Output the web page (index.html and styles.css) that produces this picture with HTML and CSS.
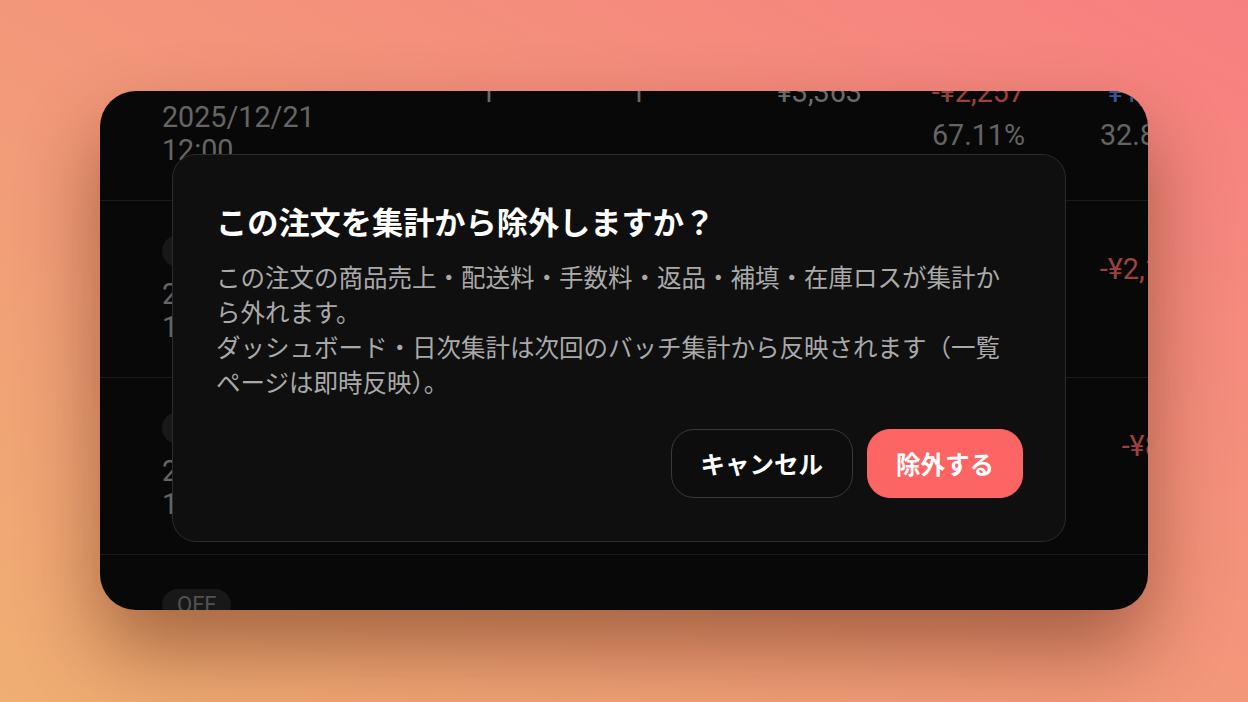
FILE: index.html
```html
<!DOCTYPE html>
<html lang="ja">
<head>
<meta charset="utf-8">
<title>注文除外</title>
<link rel="stylesheet" href="styles.css">
</head>
<body>
<div class="stage">
  <div class="window">
    <div class="table">
      <div class="row">
        <div class="cell date-cell">
          <span class="pill">OFF</span>
          <div class="date">2025/12/21<br>12:00</div>
        </div>
        <div class="cell num"><div class="v">1</div></div>
        <div class="cell num"><div class="v">1</div></div>
        <div class="cell num"><div class="v">¥3,363</div></div>
        <div class="cell num"><div class="v neg">-¥2,257</div><div class="pct">67.11%</div></div>
        <div class="cell num"><div class="v pos">¥1,106</div><div class="pct">32.89%</div></div>
      </div>
      <div class="row">
        <div class="cell date-cell">
          <span class="pill">OFF</span>
          <div class="date">2025/12/20<br>18:30</div>
        </div>
        <div class="cell num"><div class="v">1</div></div>
        <div class="cell num"><div class="v">1</div></div>
        <div class="cell num"><div class="v">¥2,980</div></div>
        <div class="cell num"><div class="v neg">-¥3,104</div></div>
        <div class="cell num"><div class="v neg">-¥2,124</div></div>
      </div>
      <div class="row">
        <div class="cell date-cell">
          <span class="pill">OFF</span>
          <div class="date">2025/12/19<br>10:15</div>
        </div>
        <div class="cell num"><div class="v">1</div></div>
        <div class="cell num"><div class="v">1</div></div>
        <div class="cell num"><div class="v">¥1,480</div></div>
        <div class="cell num"><div class="v neg">-¥2,292</div></div>
        <div class="cell num"><div class="v neg">-¥812</div></div>
      </div>
      <div class="row">
        <div class="cell date-cell">
          <span class="pill">OFF</span>
          <div class="date">2025/12/18<br>09:00</div>
        </div>
        <div class="cell num"><div class="v">1</div></div>
        <div class="cell num"><div class="v">1</div></div>
        <div class="cell num"><div class="v">¥2,200</div></div>
        <div class="cell num"><div class="v neg">-¥1,950</div></div>
        <div class="cell num"><div class="v pos">¥250</div></div>
      </div>
    </div>
    <div class="overlay"></div>
    <div class="dialog" role="dialog">
      <h2 class="dialog-title">この注文を集計から除外しますか？</h2>
      <p class="dialog-body">この注文の商品売上・配送料・手数料・返品・補填・在庫ロスが集計から外れます。<br>ダッシュボード・日次集計は次回のバッチ集計から反映されます（一覧ページは即時反映）。</p>
      <div class="actions">
        <button class="btn btn-cancel">キャンセル</button>
        <button class="btn btn-danger">除外する</button>
      </div>
    </div>
  </div>
</div>
</body>
</html>
```

FILE: styles.css
```css
html, body {
  margin: 0;
  padding: 0;
}

body {
  width: 1248px;
  height: 702px;
  overflow: hidden;
  background: linear-gradient(to top right, #efae72 0%, #f3977a 50%, #f77f80 100%);
  font-family: "Noto Sans CJK JP", "Noto Sans", sans-serif;
}

.stage {
  padding: 91px 0 0 100px;
}

.window {
  position: relative;
  width: 1048px;
  height: 519px;
  border-radius: 36px;
  overflow: hidden;
  background: #0a0a0a;
  box-shadow: 0 40px 80px rgba(70, 25, 0, 0.45);
}

.table {
  margin-top: -67px;
}

.row {
  display: grid;
  grid-template-columns: 238px 96px 150px 216px 163px 168px;
  height: 176px;
  padding-left: 62px;
  border-bottom: 1px solid #1f1f1f;
  font-family: Roboto, "Noto Sans", sans-serif;
  font-size: 28.7px;
  color: #7a7a7a;
}

.cell {
  display: flex;
  flex-direction: column;
}

.date-cell {
  align-items: flex-start;
  padding-top: 34px;
}

.pill {
  display: inline-block;
  height: 32px;
  line-height: 32px;
  padding: 0 15px;
  border-radius: 16px;
  background: #1c1c1c;
  color: #5e5e5e;
  font-size: 22px;
}

.date {
  margin-top: 11px;
  line-height: 33px;
  color: #747474;
}

.num {
  align-items: flex-end;
  padding-top: 51px;
  line-height: 34px;
}

.v.neg {
  color: #b24a49;
}

.v.pos {
  color: #3d66ad;
}

.pct {
  margin-top: 9px;
  color: #727272;
}

.overlay {
  position: absolute;
  inset: 0;
  background: rgba(0, 0, 0, 0.12);
}

.dialog {
  position: absolute;
  left: 72px;
  top: 63px;
  width: 807px;
  padding: 43px 42px 43px 43px;
  border: 1px solid #2c2c2c;
  border-radius: 24px;
  background: #0f0f0f;
  color: #fff;
}

.dialog-title {
  margin: 0;
  font-size: 31.2px;
  line-height: 46px;
  font-weight: 700;
  color: #ffffff;
}

.dialog-body {
  margin: 15px 0 0;
  max-width: 792px;
  font-size: 24.5px;
  line-height: 35px;
  color: #a9a9a9;
}

.actions {
  display: flex;
  justify-content: flex-end;
  gap: 14px;
  margin-top: 30px;
}

.btn {
  height: 69px;
  padding: 0 28px;
  border-radius: 23px;
  font-family: "Noto Sans CJK JP", "Noto Sans", sans-serif;
  font-size: 24.5px;
  font-weight: 700;
  color: #ffffff;
  cursor: pointer;
}

.btn-cancel {
  padding: 0 29px;
  background: #0d0d0d;
  border: 1px solid #3a3a3a;
}

.btn-danger {
  background: #fd6565;
  border: 1px solid #fd6565;
}
```
